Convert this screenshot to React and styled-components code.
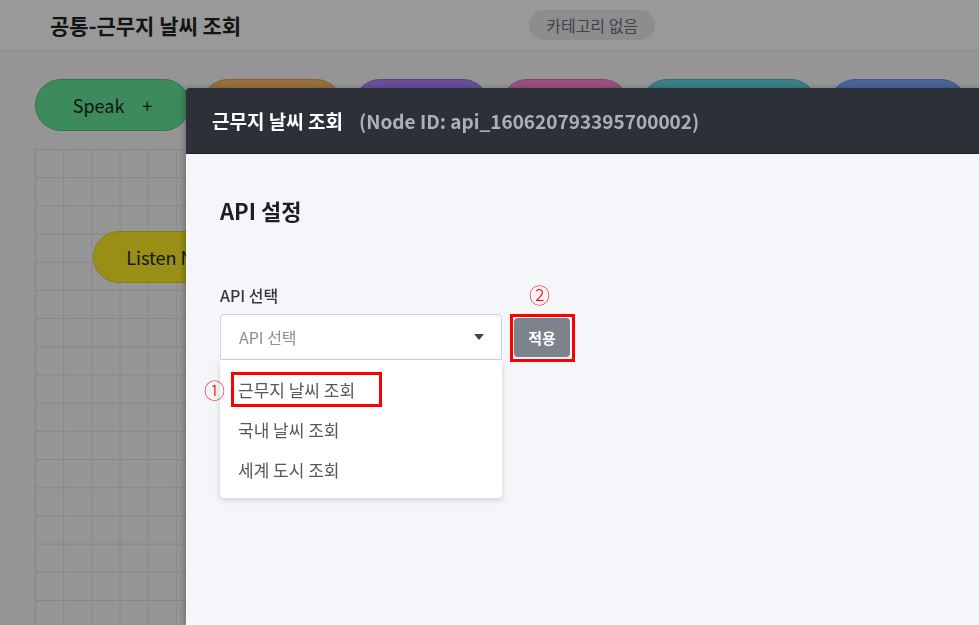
import React from "react";
import styled, { createGlobalStyle } from "styled-components";

const GlobalStyle = createGlobalStyle`
  * { box-sizing: border-box; }
  html, body { margin: 0; padding: 0; }
  body {
    font-family: "Noto Sans CJK KR", "Noto Sans", sans-serif;
    background: #f8f8f8;
    overflow: hidden;
  }
`;

const Page = styled.div`
  width: 979px;
  height: 625px;
  display: flex;
  flex-direction: column;
  background: #f8f8f8;
`;

const TopBar = styled.header`
  height: 51px;
  flex-shrink: 0;
  display: flex;
  align-items: center;
  padding-left: 50px;
  background: #fff;
  border-bottom: 1px solid #e6e6e6;
`;

const PageTitle = styled.h1`
  margin: 0;
  font-size: 21px;
  font-weight: 700;
  color: #222;
`;

const CategoryPill = styled.span`
  margin-left: 288px;
  height: 30px;
  padding: 0 17px;
  display: flex;
  align-items: center;
  border-radius: 15px;
  background: #e9ebef;
  color: #6e7075;
  font-size: 16px;
`;

const Canvas = styled.div`
  flex: 1;
  display: flex;
  flex-direction: column;
  padding: 28px 0 0 35px;
`;

const Palette = styled.div`
  display: flex;
  gap: 12px;
  height: 52px;
`;

const NodePill = styled.div`
  width: ${(p) => p.w}px;
  height: 52px;
  border-radius: 26px;
  background: ${(p) => p.bg};
  border: 1px solid ${(p) => p.line};
  display: flex;
  align-items: center;
  justify-content: center;
  gap: 18px;
  font-size: 18px;
  color: #1c2a22;
`;

const Grid = styled.div`
  flex: 1;
  margin-top: 18px;
  position: relative;
  background-color: #fafafa;
  background-image:
    linear-gradient(to right, #e2e2e2 1px, transparent 1px),
    linear-gradient(to bottom, #e2e2e2 1px, transparent 1px);
  background-size: 28.2px 28.2px;
`;

const CanvasNode = styled(NodePill)`
  position: absolute;
  left: ${(p) => p.x}px;
  top: ${(p) => p.y}px;
`;

const Dim = styled.div`
  position: fixed;
  inset: 0;
  background: rgba(0, 0, 0, 0.4);
`;

const Drawer = styled.aside`
  position: fixed;
  top: 88px;
  left: 186px;
  right: 0;
  bottom: 0;
  display: flex;
  flex-direction: column;
  background: #f5f6fa;
  border-top-left-radius: 3px;
  box-shadow: -2px 0 6px rgba(0, 0, 0, 0.25);
`;

const DrawerHead = styled.div`
  height: 66px;
  flex-shrink: 0;
  display: flex;
  align-items: center;
  gap: 16px;
  padding-left: 26px;
  background: #2c3038;
  border-bottom: 1px solid #1f2227;
  border-top-left-radius: 3px;
  font-size: 19px;
  font-weight: 700;
`;

const HeadTitle = styled.span`
  color: #fff;
`;

const HeadId = styled.span`
  color: #a9b1bd;
  font-weight: 600;
`;

const DrawerBody = styled.div`
  padding: 41px 34px;
  display: flex;
  flex-direction: column;
`;

const SectionTitle = styled.h2`
  margin: 0;
  font-size: 22px;
  line-height: 30px;
  font-weight: 700;
  color: #1d1f23;
`;

const FieldLabel = styled.label`
  margin-top: 58px;
  font-size: 16px;
  line-height: 24px;
  font-weight: 500;
  color: #34373c;
`;

const FieldRow = styled.div`
  margin-top: 7px;
  display: flex;
  align-items: flex-start;
  gap: 8px;
`;

const SelectWrap = styled.div`
  width: 282px;
  display: flex;
  flex-direction: column;
`;

const SelectBox = styled.div`
  height: 46px;
  display: flex;
  align-items: center;
  justify-content: space-between;
  padding: 0 17px 0 18px;
  background: #fff;
  border: 1px solid #cfd4dc;
  border-radius: 4px 4px 0 0;
  font-size: 16px;
  color: #8a8d93;
`;

const Caret = styled.span`
  width: 0;
  height: 0;
  border-left: 5px solid transparent;
  border-right: 5px solid transparent;
  border-top: 6px solid #3f4247;
`;

const Menu = styled.ul`
  margin: 0;
  padding: 9px 0;
  list-style: none;
  background: #fff;
  border-radius: 0 0 4px 4px;
  box-shadow: 0 2px 6px rgba(0, 0, 0, 0.16);
`;

const MenuItem = styled.li`
  height: 40px;
  display: flex;
  align-items: center;
  padding-left: 18px;
  font-size: 17px;
  color: #55585e;
`;

const Marked = styled.span`
  position: relative;
  display: inline-flex;
  align-items: center;
  height: 35px;
  margin-left: -7px;
  padding: 0 24px 0 4px;
  border: 3px solid #f00;
`;

const Badge = styled.span`
  position: absolute;
  left: ${(p) => p.left}px;
  top: ${(p) => p.top}px;
  font-family: "Noto Sans CJK KR", "DejaVu Sans", sans-serif;
  font-size: 21px;
  font-weight: 300;
  line-height: 21px;
  color: #f00;
`;

const ApplyMark = styled.div`
  position: relative;
  padding: 1px 2px 2px 1px;
  border: 3px solid #f00;
`;

const ApplyButton = styled.button`
  display: block;
  width: 56px;
  height: 39px;
  border: none;
  border-radius: 4px;
  background: #7d838c;
  color: #fff;
  font-family: inherit;
  font-size: 15px;
  font-weight: 700;
`;

const palette = [
  { w: 155, bg: "#66e699", line: "#52c47f", label: "Speak", plus: true },
  { w: 140, bg: "#ffbb66", line: "#e0a050" },
  { w: 135, bg: "#b084ff", line: "#9670e0" },
  { w: 128, bg: "#ff87d4", line: "#e06fb8" },
  { w: 176, bg: "#66d5e3", line: "#50b8c6" },
  { w: 138, bg: "#7ba7ff", line: "#6590e6" },
];

const options = ["근무지 날씨 조회", "국내 날씨 조회", "세계 도시 조회"];

export default function App() {
  return (
    <>
      <GlobalStyle />
      <Page>
        <TopBar>
          <PageTitle>공통-근무지 날씨 조회</PageTitle>
          <CategoryPill>카테고리 없음</CategoryPill>
        </TopBar>
        <Canvas>
          <Palette>
            {palette.map((n, i) => (
              <NodePill key={i} w={n.w} bg={n.bg} line={n.line}>
                {n.label && <span>{n.label}</span>}
                {n.plus && <span>+</span>}
              </NodePill>
            ))}
          </Palette>
          <Grid>
            <CanvasNode x={58} y={82} w={166} bg="#ffee26" line="#e6d31a">
              Listen Node
            </CanvasNode>
          </Grid>
        </Canvas>
      </Page>
      <Dim />
      <Drawer>
        <DrawerHead>
          <HeadTitle>근무지 날씨 조회</HeadTitle>
          <HeadId>(Node ID: api_160620793395700002)</HeadId>
        </DrawerHead>
        <DrawerBody>
          <SectionTitle>API 설정</SectionTitle>
          <FieldLabel>API 선택</FieldLabel>
          <FieldRow>
            <SelectWrap>
              <SelectBox>
                <span>API 선택</span>
                <Caret />
              </SelectBox>
              <Menu>
                {options.map((o, i) => (
                  <MenuItem key={o}>
                    {i === 0 ? (
                      <Marked>
                        <Badge left={-30} top={4}>①</Badge>
                        {o}
                      </Marked>
                    ) : (
                      o
                    )}
                  </MenuItem>
                ))}
              </Menu>
            </SelectWrap>
            <ApplyMark>
              <Badge left={16} top={-33}>②</Badge>
              <ApplyButton>적용</ApplyButton>
            </ApplyMark>
          </FieldRow>
        </DrawerBody>
      </Drawer>
    </>
  );
}
